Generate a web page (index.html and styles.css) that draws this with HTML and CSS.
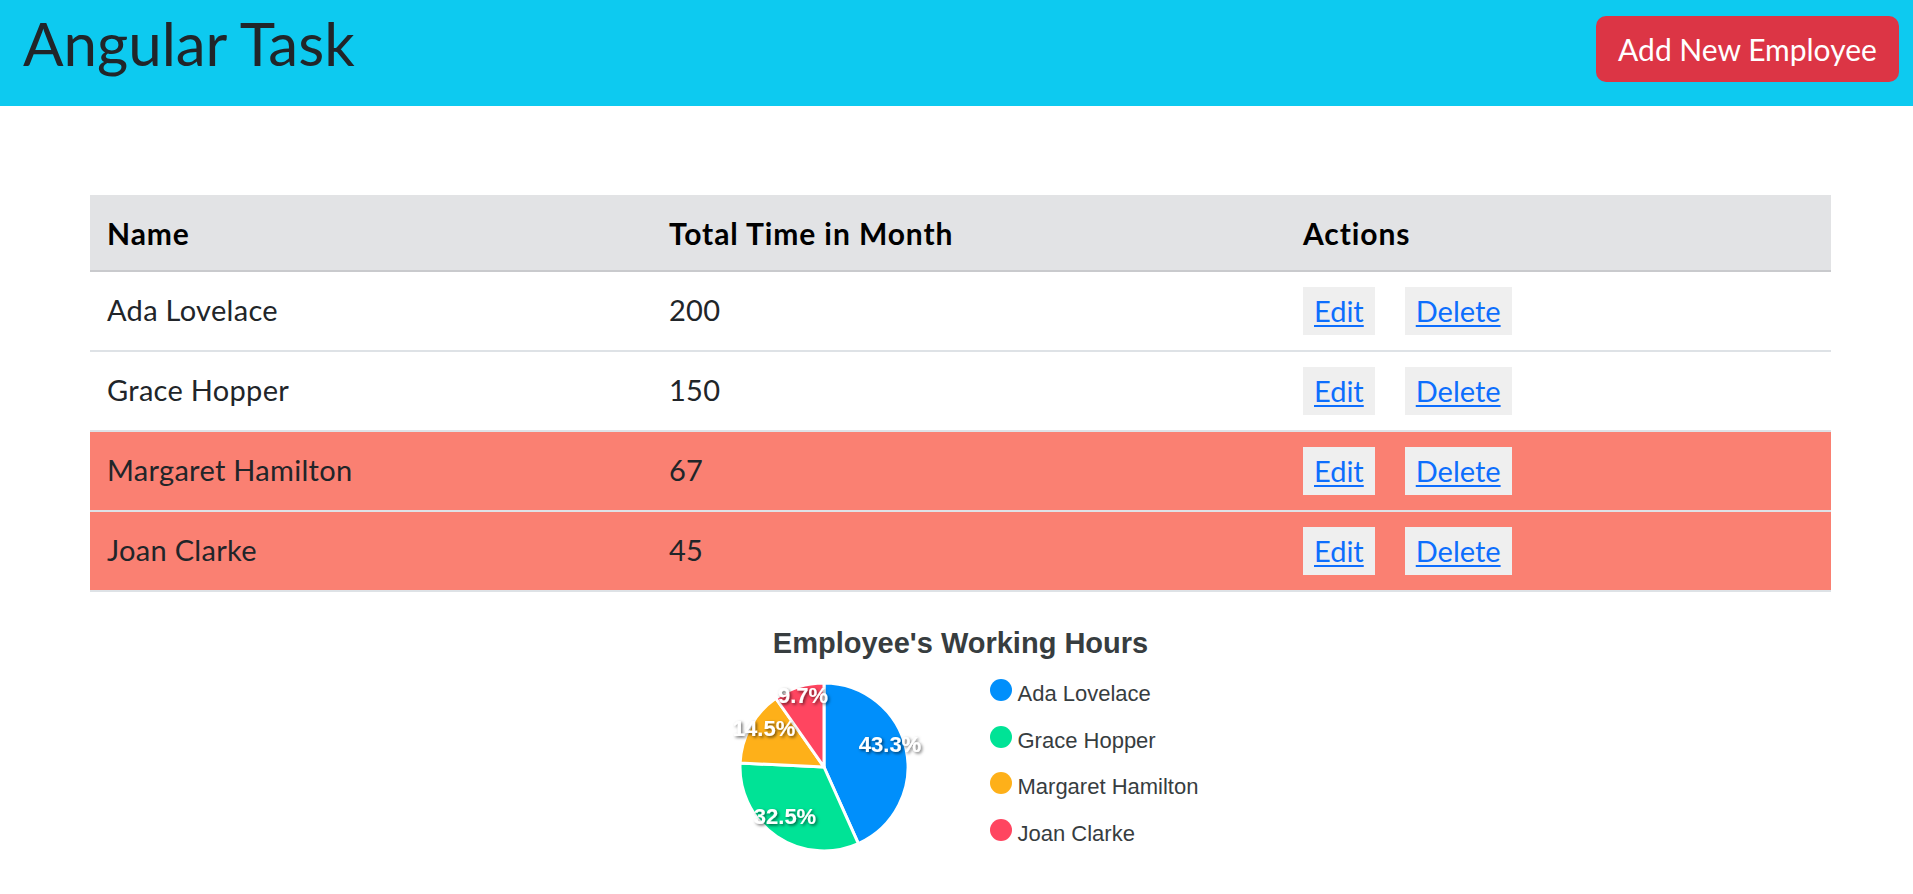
FILE: index.html
```html
<!DOCTYPE html>
<html lang="en">
<head>
<meta charset="utf-8">
<title>Angular Task</title>
<link rel="stylesheet" href="styles.css">
</head>
<body>
<header class="navbar">
  <h1 class="brand">Angular Task</h1>
  <button class="btn-add">Add New Employee</button>
</header>
<main class="content">
  <table class="emp-table">
    <colgroup>
      <col class="col-name">
      <col class="col-time">
      <col class="col-actions">
    </colgroup>
    <thead>
      <tr><th>Name</th><th>Total Time in Month</th><th>Actions</th></tr>
    </thead>
    <tbody>
      <tr>
        <td>Ada Lovelace</td><td>200</td>
        <td><div class="actions"><button class="btn-act"><a href="#">Edit</a></button><button class="btn-act"><a href="#">Delete</a></button></div></td>
      </tr>
      <tr>
        <td>Grace Hopper</td><td>150</td>
        <td><div class="actions"><button class="btn-act"><a href="#">Edit</a></button><button class="btn-act"><a href="#">Delete</a></button></div></td>
      </tr>
      <tr class="row-low">
        <td>Margaret Hamilton</td><td>67</td>
        <td><div class="actions"><button class="btn-act"><a href="#">Edit</a></button><button class="btn-act"><a href="#">Delete</a></button></div></td>
      </tr>
      <tr class="row-low">
        <td>Joan Clarke</td><td>45</td>
        <td><div class="actions"><button class="btn-act"><a href="#">Edit</a></button><button class="btn-act"><a href="#">Delete</a></button></div></td>
      </tr>
    </tbody>
  </table>

  <section class="chart">
    <h2 class="chart-title">Employee's Working Hours</h2>
    <div class="chart-body">
      <svg class="pie" width="168" height="168" viewBox="0 0 168 168">
        <defs>
          <filter id="lblShadow" x="-20%" y="-20%" width="140%" height="140%">
            <feDropShadow dx="1.5" dy="1.5" stdDeviation="1.5" flood-color="#000" flood-opacity="0.6"/>
          </filter>
        </defs>
        <g stroke="#fff" stroke-width="3" stroke-linejoin="round">
          <path d="M84 84 L84 0 A84 84 0 0 1 118.37 160.64 Z" fill="#008FFB"/>
          <path d="M84 84 L118.37 160.64 A84 84 0 0 1 0.1 80 Z" fill="#00E396"/>
          <path d="M84 84 L0.1 80 A84 84 0 0 1 35.74 15.25 Z" fill="#FEB019"/>
          <path d="M84 84 L35.74 15.25 A84 84 0 0 1 84 0 Z" fill="#FF4560"/>
        </g>
        <g class="pie-labels" filter="url(#lblShadow)">
          <text x="150" y="61">43.3%</text>
          <text x="45" y="133">32.5%</text>
          <text x="24" y="45">14.5%</text>
          <text x="63" y="12">9.7%</text>
        </g>
      </svg>
      <ul class="legend">
        <li class="legend-item"><span class="marker m-blue"></span><span class="legend-text">Ada Lovelace</span></li>
        <li class="legend-item"><span class="marker m-green"></span><span class="legend-text">Grace Hopper</span></li>
        <li class="legend-item"><span class="marker m-orange"></span><span class="legend-text">Margaret Hamilton</span></li>
        <li class="legend-item"><span class="marker m-red"></span><span class="legend-text">Joan Clarke</span></li>
      </ul>
    </div>
  </section>
</main>
</body>
</html>
```

FILE: styles.css
```css
* { box-sizing: border-box; }

body {
  margin: 0;
  font-family: Lato, "Open Sans", "Noto Sans", sans-serif;
  color: #212529;
  background: #fff;
}

.navbar {
  background: #0dcaf0;
  height: 106px;
  display: flex;
  justify-content: space-between;
  align-items: flex-start;
  padding: 0 14px 0 23px;
}

.brand {
  margin: 7px 0 0;
  font-size: 60px;
  line-height: 72px;
  font-weight: 400;
  color: #212529;
}

.btn-add {
  margin-top: 16px;
  height: 66px;
  width: 303px;
  padding: 0;
  border: none;
  border-radius: 10px;
  background: #dc3545;
  color: #fff;
  font-family: inherit;
  font-size: 30px;
  line-height: 66px;
}

.content {
  padding: 89px 82px 0 90px;
}

.emp-table {
  width: 100%;
  border-collapse: collapse;
  table-layout: fixed;
}

.col-name { width: 562px; }
.col-time { width: 634px; }
.col-actions { width: 545px; }

.emp-table th {
  background: #e2e3e5;
  height: 76px;
  padding: 0 17px;
  text-align: left;
  font-size: 30px;
  letter-spacing: 0.9px;
  font-weight: 700;
  color: #000;
  border-bottom: 2px solid #c9cacd;
}

.emp-table td {
  height: 80px;
  padding: 0 17px 3px;
  font-size: 29px;
  letter-spacing: 0.3px;
  border-bottom: 2px solid #dee2e6;
  vertical-align: middle;
}

.row-low td {
  background: #fa8072;
}

.actions {
  display: flex;
  gap: 30px;
  margin-top: 3px;
}

.btn-act {
  height: 48px;
  padding: 0 11px;
  border: none;
  background: #efefef;
  font-family: inherit;
  font-size: 29px;
  letter-spacing: 0;
  line-height: 48px;
}

.btn-act a {
  color: #0d6efd;
  text-decoration: underline;
  text-underline-offset: 3px;
}

.chart {
  width: 477px;
  margin: 37px auto 0;
}

.chart-title {
  margin: 0;
  text-align: center;
  font-family: "Liberation Sans", Arial, sans-serif;
  font-size: 29px;
  line-height: 28px;
  font-weight: 700;
  color: #373d3f;
}

.chart-body {
  display: flex;
  align-items: flex-start;
  margin-top: 26px;
  padding-left: 18px;
}

.pie {
  overflow: visible;
  flex: none;
}

.pie-labels text {
  font-family: "Liberation Sans", Arial, sans-serif;
  font-size: 22px;
  font-weight: 700;
  fill: #fff;
  text-anchor: middle;
  dominant-baseline: central;
}

.legend {
  list-style: none;
  margin: -4px 0 0 81.5px;
  padding: 0;
  display: flex;
  flex-direction: column;
  gap: 20.5px;
}

.legend-item {
  display: flex;
  align-items: flex-start;
  gap: 6px;
}

.marker {
  width: 22px;
  height: 22px;
  border-radius: 50%;
  flex: none;
}

.m-blue { background: #008FFB; }
.m-green { background: #00E396; }
.m-orange { background: #FEB019; }
.m-red { background: #FF4560; }

.legend-text {
  margin-top: 4px;
  font-family: "Liberation Sans", Arial, sans-serif;
  font-size: 22px;
  line-height: 22px;
  color: #373d3f;
}
```
